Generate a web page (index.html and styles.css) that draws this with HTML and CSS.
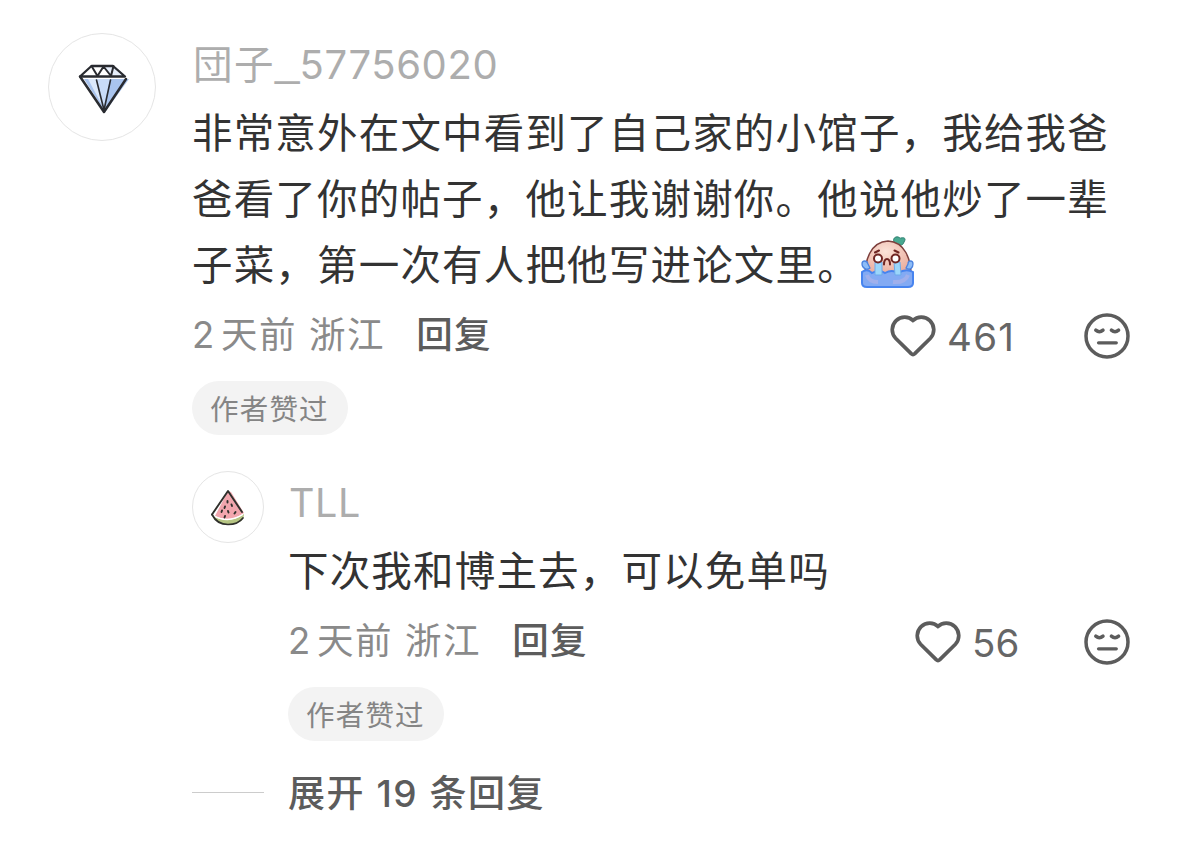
FILE: index.html
```
<!DOCTYPE html>
<html lang="zh-CN">
<head>
    <meta charset="UTF-8">
    <meta name="viewport" content="width=device-width, initial-scale=1.0">
    <title>评论</title>
    <link rel="stylesheet" href="styles.css">
</head>
<body>
    <!-- Shared icons -->
    <svg class="icon-defs" width="0" height="0">
        <symbol id="icon-heart" viewBox="0 0 46 42">
            <path d="M23 5.6C18.6 .8 10.9 .9 6.1 5.6C1.2 10.4 .9 18.2 5.6 23.2L21.2 38.6Q23 40.3 24.8 38.6L40.4 23.2C45.1 18.2 44.8 10.4 39.9 5.6C35.1 .9 27.4 .8 23 5.6Z" fill="none" stroke="#5c5c5c" stroke-width="3.7" stroke-linejoin="round"/>
        </symbol>
        <symbol id="icon-face" viewBox="0 0 46 46">
            <g fill="none" stroke="#5c5c5c" stroke-width="3.5" stroke-linecap="round">
                <circle cx="23" cy="23" r="21"/>
                <path d="M11.8 17.1Q15.4 20.3 19 17.1M27.4 17.1Q31 20.3 34.6 17.1"/>
                <path d="M14.5 29.8H32.3" stroke-width="3.2"/>
            </g>
        </symbol>
    </svg>

    <main class="comment">
        <div class="avatar">
            <svg width="54" height="54" viewBox="0 0 54 54">
                <path d="M9 17H54L30 50Z" fill="#a9c4ee"/>
                <path d="M13 17H23L29 47Z" fill="#dce9fb"/>
                <path d="M21 17H35L29 47Z" fill="#c9dcf8"/>
                <path d="M28 4L36 14H51L40 4Z" fill="#e6eefb"/>
                <g fill="none" stroke="#292b30" stroke-width="2.3" stroke-linejoin="round" stroke-linecap="round">
                    <path d="M16.5 4H38L50 14.5H5Z"/>
                    <path d="M5 14.5L29 50L51 17" stroke-width="2.5"/>
                    <path d="M16.5 4L22.5 14L28.5 4.5L36 14L38.5 4" stroke-width="2"/>
                    <path d="M21.5 18L29 48L35.5 18" stroke-width="1.6"/>
                </g>
            </svg>
        </div>
        <div class="content">
            <div class="name">団子<span class="underscore">_</span><span class="num">57756020</span></div>
            <p class="text">非常意外在文中看到了自己家的小馆子，我给我爸爸看了你的帖子，他让我谢谢你。他说他炒了一辈子菜，第一次有人把他写进论文里。<svg class="emoji" width="56" height="54" viewBox="0 0 56 54">
                <defs>
                    <radialGradient id="skin" cx="45%" cy="30%" r="75%">
                        <stop offset="0" stop-color="#fbe3d8"/>
                        <stop offset="1" stop-color="#e8a595"/>
                    </radialGradient>
                </defs>
                <path d="M35 9C33 6 33 3 36 2C39 1 40 4 41 3C45 2 46 4 44 7C43 11 39 11 35 9Z" fill="#48a890" stroke="#2e8070" stroke-width="1"/>
                <path d="M5 41C5 26 10 7 28 6C45 7 51 24 51 41Z" fill="url(#skin)" stroke="#7d3f3c" stroke-width="1.5"/>
                <path d="M2 29C2 25 7 25 8 29L10 33C7 36 2 33 2 29ZM53 29C53 25 48 25 48 29L46 33C50 36 53 33 53 29Z" fill="#8dbcf7" stroke="#4c83df" stroke-width="1.3"/>
                <path d="M2 37Q7 33 12 38Q19 34 25 38Q32 34 38 38Q46 33 53 37V48Q53 52 48 52H7Q2 52 2 48Z" fill="#83aaf3" stroke="#4784ef" stroke-width="2"/>
                <path d="M7 40Q9 47 18 47M33 47Q45 48 48 40" fill="none" stroke="#a0b0ec" stroke-width="4"/>
                <path d="M15 27H22V40H15ZM34 27H40L41 40H35Z" fill="#9bd6fa" stroke="#6ca9ea" stroke-width="1"/>
                <g fill="#fff" stroke="#6f2623" stroke-width="2">
                    <circle cx="18" cy="23.5" r="4"/>
                    <circle cx="35.5" cy="23.5" r="4"/>
                </g>
                <path d="M15 17.5L19 15.5M34.5 15.5L38.5 17.5M24 29.5C24 22 30 22 30 29.5" fill="none" stroke="#6f2623" stroke-width="2" stroke-linecap="round"/>
            </svg></p>
            <div class="meta">
                <span class="info"><span class="day">2</span>天前 浙江</span>
                <span class="answer">回复</span>
                <div class="actions">
                    <svg class="heart" width="46" height="42"><use href="#icon-heart"/></svg>
                    <span class="count">461</span>
                    <svg class="face" width="46" height="46"><use href="#icon-face"/></svg>
                </div>
            </div>
            <span class="tag">作者赞过</span>

            <section class="reply">
                <div class="avatar small">
                    <svg width="36" height="38" viewBox="0 0 36 38">
                        <path d="M18 2L21 3L34 24Q20 34 5 27Z" fill="#f2a6ae"/>
                        <path d="M2 26Q18 37 34 25Q34 35 18 36Q6 35 2 26Z" fill="#b6c583"/>
                        <path d="M3 26.5Q17 34.5 33 25.5" fill="none" stroke="#fff" stroke-width="1.2"/>
                        <g fill="none" stroke="#30302c" stroke-linecap="round" stroke-linejoin="round">
                            <path d="M32 23L18 2L2 25.5" stroke-width="1.9"/>
                            <path d="M2 25.5Q7 35.5 18 35.5Q28 35.5 33 29" stroke-width="1.7"/>
                            <path d="M17.5 12V13.5M15 17.5L14.5 19M21.5 15.5L22 17M12 21.5L11.5 23M18 22L18.5 23.5M25.5 23L24.5 24.5M15 27L14.5 28.5" stroke-width="1.9"/>
                        </g>
                    </svg>
                </div>
                <div class="content">
                    <div class="name"><span class="latin">TLL</span></div>
                    <p class="text">下次我和博主去，可以免单吗</p>
                    <div class="meta">
                        <span class="info"><span class="day">2</span>天前 浙江</span>
                        <span class="answer">回复</span>
                        <div class="actions">
                            <svg class="heart" width="46" height="42"><use href="#icon-heart"/></svg>
                            <span class="count short">56</span>
                            <svg class="face" width="46" height="46"><use href="#icon-face"/></svg>
                        </div>
                    </div>
                    <span class="tag">作者赞过</span>
                </div>
            </section>

            <div class="expand">
                <span class="line"></span>
                <span>展开 <span class="total">19</span> 条回复</span>
            </div>
        </div>
    </main>
</body>
</html>
```
FILE: styles.css
```
* {
    box-sizing: border-box;
}
body {
    margin: 0;
    background: #fff;
    color: #333;
    font-family: Inter, "Noto Sans CJK SC", sans-serif;
}
svg {
    display: block;
    flex-shrink: 0;
}
.icon-defs {
    position: absolute;
}
.comment {
    display: flex;
    gap: 36px;
    padding: 33px 49px 0 48px;
}
.avatar {
    display: flex;
    flex-shrink: 0;
    align-items: center;
    justify-content: center;
    width: 108px;
    height: 108px;
    border: 1.5px solid #e5e5e5;
    border-radius: 50%;
    padding-top: 3px;
}
.avatar.small {
    width: 72px;
    height: 72px;
    padding-top: 2px;
}
.content {
    flex: 1;
    min-width: 0;
}
.name {
    height: 68px;
    padding-left: 1px;
    line-height: 64px;
    font-size: 39.5px;
    letter-spacing: 1.5px;
    color: #adadad;
    white-space: nowrap;
}
.underscore {
    font-family: "Liberation Sans", sans-serif;
    font-size: 44px;
    line-height: 1;
    letter-spacing: 0;
    vertical-align: 4px;
}
.num {
    font-size: 40px;
    letter-spacing: 0.6px;
}
.latin {
    letter-spacing: 0.6px;
}
.text {
    margin: 0;
    width: 930px;
    font-size: 40.5px;
    line-height: 66px;
    letter-spacing: 1.18px;
}
.emoji {
    display: inline-block;
    height: 54px;
    margin: -12px 0 -12px 1px;
    vertical-align: 3px;
}
.meta {
    display: flex;
    align-items: center;
    height: 72px;
    font-size: 36.5px;
    white-space: nowrap;
}
.info {
    margin-top: -5px;
    letter-spacing: 1.6px;
    color: #8a8a8a;
}
.day {
    margin-right: 5px;
}
.answer {
    margin-top: -5px;
    margin-left: 31px;
    font-weight: 500;
    letter-spacing: 1.3px;
    color: #5c5c5c;
}
.actions {
    display: flex;
    align-items: center;
    margin-left: auto;
    padding-top: 2px;
    color: #666;
}
.count {
    width: 148px;
    padding-left: 11px;
    padding-top: 2px;
    font-size: 38.5px;
    letter-spacing: 1.3px;
}
.count.short {
    width: 123px;
    letter-spacing: 0;
}
.tag {
    display: block;
    width: 156px;
    height: 54px;
    margin-top: 10px;
    border-radius: 27px;
    background: #f3f3f3;
    color: #858585;
    font-size: 28.5px;
    line-height: 57px;
    letter-spacing: 1.2px;
    padding-left: 18px;
    white-space: nowrap;
}
.reply {
    display: flex;
    gap: 24px;
    margin-top: 36px;
}
.reply .text {
    width: auto;
}
.expand {
    display: flex;
    align-items: center;
    gap: 24px;
    height: 60px;
    margin-top: 21px;
    color: #5c5c5c;
    font-size: 37px;
    font-weight: 500;
    letter-spacing: 1.5px;
    line-height: 56px;
    white-space: nowrap;
}
.expand > span:last-child {
    padding-top: 3px;
}
.line {
    width: 72px;
    height: 1px;
    background: #ccc;
}
```
